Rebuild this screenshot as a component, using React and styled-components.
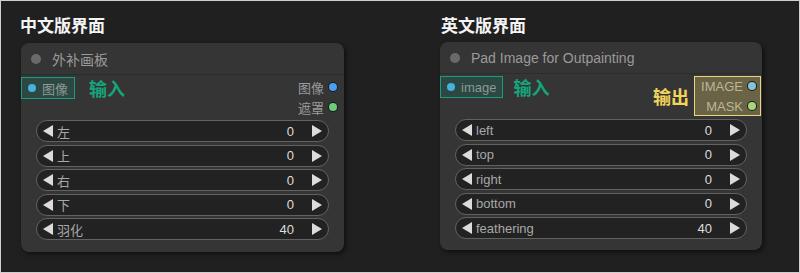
import React from 'react';
import styled, { createGlobalStyle } from 'styled-components';

const GlobalStyle = createGlobalStyle`
  html, body {
    margin: 0;
    padding: 0;
    background: #202020;
  }
`;

const Frame = styled.div`
  box-sizing: border-box;
  width: 800px;
  height: 273px;
  border: 1px solid #cfcfcf;
  background: #202020;
  display: grid;
  grid-template-columns: 419px 1fr;
  font-family: "Liberation Sans", "Noto Sans CJK SC", sans-serif;
`;

const Panel = styled.section`
  display: flex;
  flex-direction: column;
  padding: 13px 0 0 ${p => p.$inset}px;
`;

const Heading = styled.h2`
  margin: 0 0 7px -1px;
  height: 22px;
  line-height: 22px;
  font-family: "Noto Sans CJK SC", sans-serif;
  font-size: 17px;
  font-weight: 700;
  color: #f4f4f4;
`;

const Card = styled.div`
  width: ${p => p.$w}px;
  height: ${p => p.$h}px;
  box-sizing: border-box;
  background: #353535;
  border-radius: 8px;
  box-shadow: 2px 2px 5px rgba(0, 0, 0, 0.55);
  display: flex;
  flex-direction: column;
`;

const TitleBar = styled.div`
  height: 31px;
  display: flex;
  align-items: center;
  gap: 11px;
  padding-left: 10px;
  border-bottom: 1px solid #2c2c2c;
  color: #9a9a9a;
  font-size: 14px;
`;

const TitleDot = styled.span`
  width: 10px;
  height: 10px;
  border-radius: 50%;
  background: #6a6a6a;
`;

const Slots = styled.div`
  display: flex;
  align-items: flex-start;
  padding-top: 2px;
  height: 40px;
`;

const InputBox = styled.div`
  height: 22px;
  box-sizing: border-box;
  display: flex;
  align-items: center;
  gap: 6px;
  padding: 0 6px;
  border: 1px solid #1c9c7e;
  background: #2d4842;
  color: #8a9a96;
  font-size: 13px;
`;

const SlotDot = styled.span`
  width: 8px;
  height: 8px;
  border-radius: 50%;
  background: ${p => p.$color};
  box-shadow: 0 0 0 1px ${p => p.$ring || 'rgba(0,0,0,0.6)'};
  flex: none;
`;

const Callout = styled.span`
  font-family: "Noto Sans CJK SC", sans-serif;
  font-size: 18px;
  font-weight: 700;
  color: ${p => p.$color};
  line-height: 22px;
  margin-top: ${p => p.$top || 0}px;
`;

const Spacer = styled.div`
  flex: 1;
`;

const OutputBox = styled.div`
  box-sizing: border-box;
  height: 40px;
  display: flex;
  flex-direction: column;
  gap: 2px;
  padding: ${p => (p.$framed ? '0 4px 0 6px' : '0 6px 0 0')};
  border: 1px solid ${p => (p.$framed ? '#ead77a' : 'transparent')};
  background: ${p => (p.$framed ? '#6a6346' : 'transparent')};
  margin-right: ${p => (p.$framed ? 1 : 0)}px;
`;

const OutputRow = styled.div`
  height: 18px;
  display: flex;
  align-items: center;
  justify-content: flex-end;
  gap: 5px;
  color: ${p => p.$text};
  font-size: 13px;
`;

const Widgets = styled.div`
  display: flex;
  flex-direction: column;
  gap: 2.5px;
  padding: 3px 15px 0 15px;
`;

const Widget = styled.div`
  box-sizing: border-box;
  height: 22px;
  display: flex;
  align-items: center;
  border: 1px solid #616161;
  border-radius: 11px;
  background: #222222;
  padding: 0 6px;
  font-size: 13px;
`;

const Label = styled.span`
  flex: 1;
  color: #a8a8a8;
  margin-left: 4px;
`;

const Value = styled.span`
  color: #dddddd;
  margin-right: 18px;
`;

const Arrow = ({ dir }) => (
  <svg width="10" height="12" viewBox="0 0 10 12">
    <polygon points={dir === 'left' ? '10,0 10,12 0,6' : '0,0 0,12 10,6'} fill="#dcdcdc" />
  </svg>
);

function NumberWidget({ label, value }) {
  return (
    <Widget>
      <Arrow dir="left" />
      <Label>{label}</Label>
      <Value>{value}</Value>
      <Arrow dir="right" />
    </Widget>
  );
}

function Node({ title, w, h, input, outputs, framed, outColors, outText, widgets }) {
  return (
    <Card $w={w} $h={h}>
      <TitleBar>
        <TitleDot />
        {title}
      </TitleBar>
      <Slots>
        <InputBox>
          <SlotDot $color="#45b3dc" $ring="transparent" />
          {input}
        </InputBox>
        <Callout $color="#15a57b" style={{ marginLeft: framed ? 10 : 14 }}>输入</Callout>
        <Spacer />
        {framed && <Callout $color="#f2d45a" $top={9} style={{ marginRight: 5 }}>输出</Callout>}
        <OutputBox $framed={framed}>
          {outputs.map((o, i) => (
            <OutputRow key={o} $text={outText}>
              {o}
              <SlotDot $color={outColors[i]} $ring="#1c1c1c" />
            </OutputRow>
          ))}
        </OutputBox>
      </Slots>
      <Widgets>
        {widgets.map(([l, v]) => (
          <NumberWidget key={l} label={l} value={v} />
        ))}
      </Widgets>
    </Card>
  );
}

export default function App() {
  return (
    <>
      <GlobalStyle />
      <Frame>
        <Panel $inset={20}>
          <Heading>中文版界面</Heading>
          <Node
            title="外补画板"
            w={323}
            h={209}
            input="图像"
            outputs={['图像', '遮罩']}
            outColors={['#4a9ff0', '#6ccc78']}
            outText="#9a9a9a"
            widgets={[['左', 0], ['上', 0], ['右', 0], ['下', 0], ['羽化', 40]]}
          />
        </Panel>
        <Panel $inset={20}>
          <Heading style={{ marginLeft: 1, marginBottom: 6 }}>英文版界面</Heading>
          <Node
            title="Pad Image for Outpainting"
            w={322}
            h={208}
            input="image"
            framed
            outputs={['IMAGE', 'MASK']}
            outColors={['#88c4d6', '#a6d879']}
            outText="#bdb596"
            widgets={[['left', 0], ['top', 0], ['right', 0], ['bottom', 0], ['feathering', 40]]}
          />
        </Panel>
      </Frame>
    </>
  );
}
